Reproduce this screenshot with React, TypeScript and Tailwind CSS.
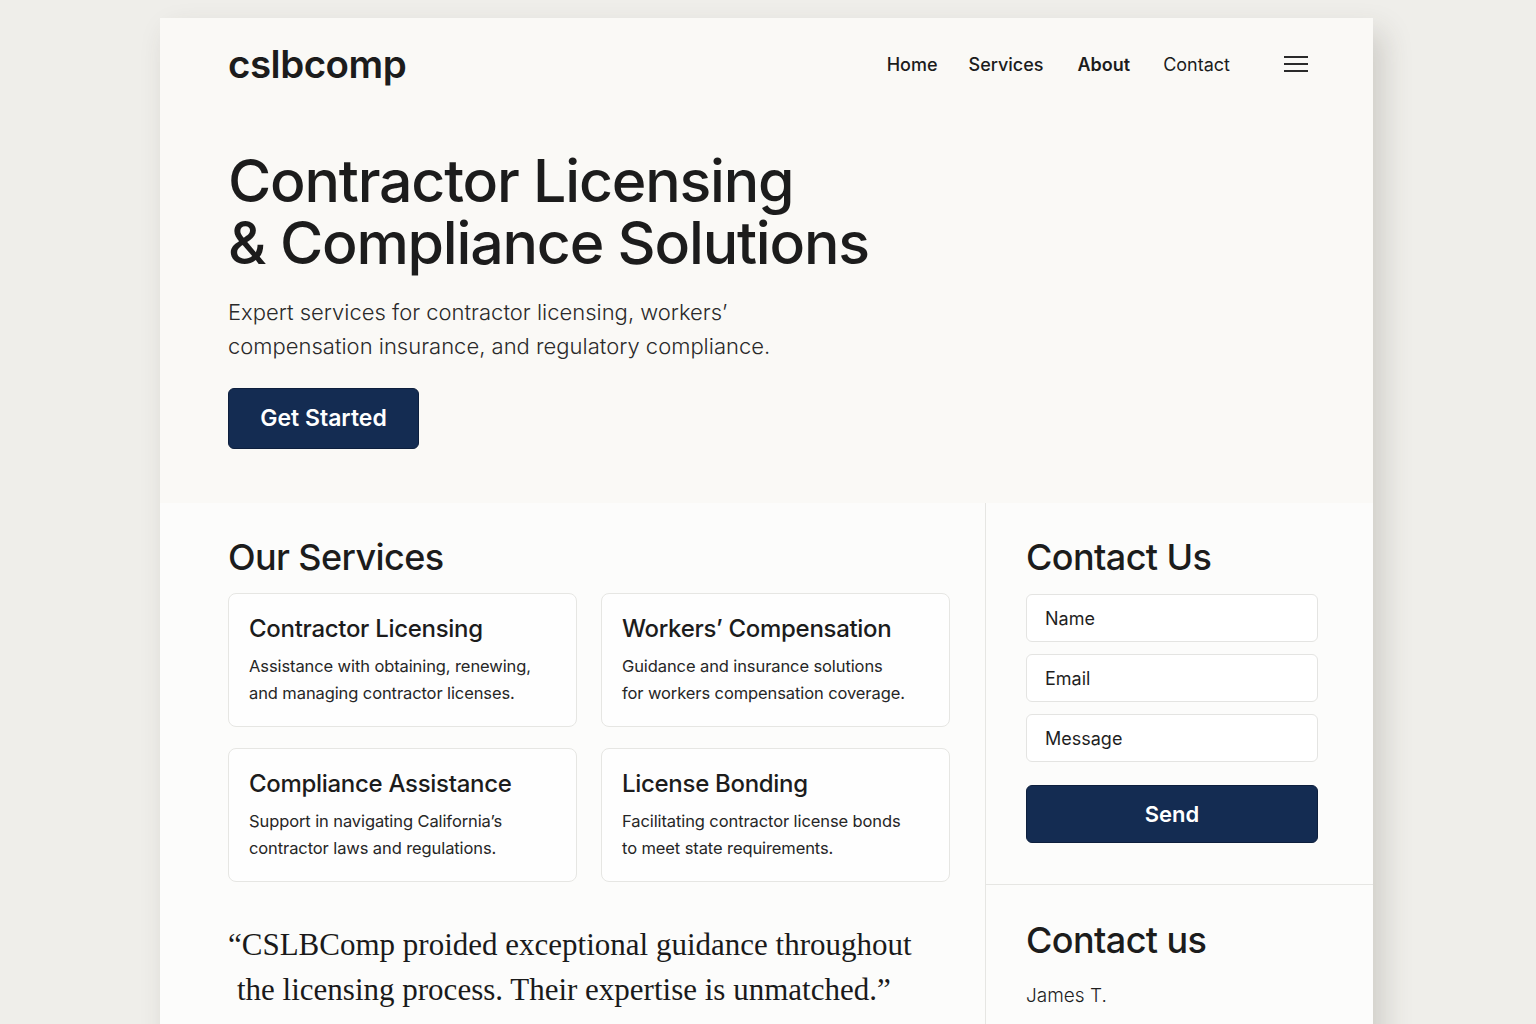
import React from "react";

const services = [
  {
    title: "Contractor Licensing",
    lines: ["Assistance with obtaining, renewing,", "and managing contractor licenses."],
  },
  {
    title: "Workers’ Compensation",
    lines: ["Guidance and insurance solutions", "for workers compensation coverage."],
  },
  {
    title: "Compliance Assistance",
    lines: ["Support in navigating California’s", "contractor laws and regulations."],
  },
  {
    title: "License Bonding",
    lines: ["Facilitating contractor license bonds", "to meet state requirements."],
  },
];

function MenuIcon() {
  return (
    <svg width="24" height="16" viewBox="0 0 24 16" fill="none">
      <path d="M0 1h24M0 8h24M0 15h24" stroke="#2a2a2a" strokeWidth="2" />
    </svg>
  );
}

export default function App() {
  return (
    <div className="min-h-screen bg-[#efeeea] pt-[18px] font-['Inter',sans-serif] text-[#1c1c1c] overflow-hidden">
      <div className="ml-[160px] w-[1213px] bg-[#faf9f6] shadow-[10px_14px_28px_rgba(60,55,45,0.18)]">
        {/* Header */}
        <header className="flex items-center justify-between h-[92px] pl-[68px] pr-[65px]">
          <div className="text-[38.5px] font-semibold tracking-[-0.5px] leading-none">cslbcomp</div>
          <nav className="flex items-center text-[18px]">
            <a className="font-medium mr-[31px]">Home</a>
            <a className="font-medium mr-[34px]">Services</a>
            <a className="font-semibold mr-[33px]">About</a>
            <a className="font-normal mr-[54px]">Contact</a>
            <MenuIcon />
          </nav>
        </header>

        {/* Hero */}
        <section className="pl-[68px] pt-[40px] h-[393px]">
          <h1 className="text-[59px] font-medium leading-[62px] tracking-[-1.2px] text-[#1c1c1c]">
            <span className="block">Contractor Licensing</span>
            <span className="block">& Compliance Solutions</span>
          </h1>
          <p className="mt-[21px] text-[22px] font-light leading-[34px] text-[#2a2a2a]">
            Expert services for contractor licensing, workers’
            <br />
            compensation insurance, and regulatory compliance.
          </p>
          <button className="mt-[25px] w-[191px] h-[61px] rounded-md bg-[#142c52] text-white text-[23px] font-semibold border border-[#0d1f3d]">
            Get Started
          </button>
        </section>

        {/* Lower */}
        <section className="grid grid-cols-[825px_388px] bg-[#fcfcfb]">
          <div className="pl-[68px] pr-[35px] pt-[32px] pb-[40px]">
            <h2 className="text-[36px] font-medium tracking-[-0.6px] leading-[44px]">Our Services</h2>
            <div className="mt-[14px] grid grid-cols-2 gap-x-[24px] gap-y-[21px]">
              {services.map((s) => (
                <div
                  key={s.title}
                  className="h-[134px] rounded-lg border border-[#e6e6e3] bg-[#fefefe] pl-[20px] pt-[20px]"
                >
                  <h3 className="text-[24px] font-medium leading-[30px] tracking-[-0.3px]">{s.title}</h3>
                  <p className="mt-[9px] text-[16.5px] leading-[27px] tracking-[-0.1px] text-[#262626]">
                    {s.lines[0]}
                    <br />
                    {s.lines[1]}
                  </p>
                </div>
              ))}
            </div>
            <blockquote className="mt-[40px] font-['Liberation_Serif',serif] text-[31px] leading-[45px] text-[#1a1a1a]">
              “CSLBComp proided exceptional guidance throughout
              <br />
              <span className="pl-[9px]">the licensing process. Their expertise is unmatched.”</span>
            </blockquote>
          </div>

          <div className="border-l border-[#e6e6e3]">
            <div className="pl-[40px] pr-[55px] pt-[32px] pb-[41px] border-b border-[#e6e6e3]">
              <h2 className="text-[36px] font-medium tracking-[-0.6px] leading-[44px]">Contact Us</h2>
              <div className="mt-[15px] flex flex-col gap-[12px]">
                {["Name", "Email", "Message"].map((p) => (
                  <div
                    key={p}
                    className="h-[48px] rounded-md border border-[#e4e4e2] bg-white flex items-center pl-[18px] text-[18px] text-[#1f1f1f]"
                  >
                    {p}
                  </div>
                ))}
              </div>
              <button className="mt-[23px] w-full h-[58px] rounded-md bg-[#142c52] border border-[#0d1f3d] text-white text-[22px] font-semibold">
                Send
              </button>
            </div>
            <div className="pl-[40px] pt-[33px] pb-[40px]">
              <h2 className="text-[36px] font-medium tracking-[-0.6px] leading-[44px]">Contact us</h2>
              <p className="mt-[20px] text-[19px] font-light text-[#1f1f1f]">James T.</p>
            </div>
          </div>
        </section>
      </div>
    </div>
  );
}
